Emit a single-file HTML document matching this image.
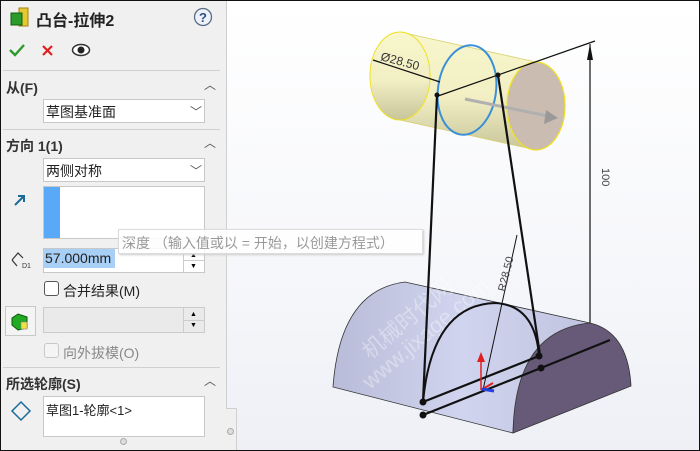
<!DOCTYPE html>
<html><head><meta charset="utf-8"><style>
*{margin:0;padding:0;box-sizing:border-box}
body{width:700px;height:451px;overflow:hidden;background:#fff;font-family:"Liberation Sans","Noto Sans CJK SC",sans-serif;position:relative}
.a{position:absolute}
.frame{position:absolute;left:0;top:0;width:700px;height:451px;border:1px solid #111;pointer-events:none}
.panel{left:1px;top:1px;width:225px;height:449px;background:#f0f0f0}
.t{font-size:14px;color:#222;white-space:nowrap}
.h{font-size:14px;font-weight:bold;color:#333}
.box{background:#fff;border:1px solid #c8c8c8}
.hr{height:1px;background:#d0d0d0;left:3px;width:217px}
.car{font-size:12px;color:#555}
</style></head><body>
<div class="a panel"></div>
<div class="a" style="left:226px;top:1px;width:1px;height:407px;background:#cfcfcf"></div>
<div class="a" style="left:227px;top:1px;width:473px;height:449px;background:linear-gradient(#ffffff,#f6f7fa 60%,#eef0f6)"></div>
<div class="a" style="left:226px;top:408px;width:11px;height:42px;background:#f0f0f0;border-top:1px solid #cfcfcf;border-right:1px solid #cfcfcf"></div>

<svg class="a" style="left:8px;top:6px" width="24" height="24"><rect x="11" y="2" width="9" height="18" fill="#e8c830" stroke="#a08010"/><rect x="3" y="7" width="11" height="12" fill="#2a9a2a" stroke="#106010"/></svg>
<div class="a" style="left:36px;top:7px;font-size:16px;font-weight:bold;color:#222">凸台-拉伸2</div>
<svg class="a" style="left:193px;top:7px" width="20" height="20"><circle cx="10" cy="10" r="8.5" fill="#eef2f8" stroke="#5a6c88" stroke-width="1.3"/><text x="10" y="15" font-size="13" font-weight="bold" text-anchor="middle" fill="#2a4f8a" font-family="Liberation Sans">?</text></svg>
<svg class="a" style="left:8px;top:42px" width="84" height="16"><path d="M2 8 L7 13 L16 3" stroke="#2a9a2a" stroke-width="2.4" fill="none"/><path d="M35 4 L44 13 M44 4 L35 13" stroke="#e02020" stroke-width="2.2"/><ellipse cx="73" cy="8" rx="8.5" ry="5.5" fill="#fff" stroke="#333" stroke-width="1.5"/><circle cx="73" cy="8" r="3.5" fill="#222"/></svg>

<div class="a hr" style="top:70px"></div>
<div class="a h" style="left:6px;top:78px">从(F)</div>
<div class="a car" style="left:204px;top:76px">︿</div>
<div class="a box" style="left:43px;top:99px;width:162px;height:24px"></div>
<div class="a t" style="left:46px;top:102px">草图基准面</div>
<div class="a car" style="left:190px;top:103px">﹀</div>

<div class="a hr" style="top:129px"></div>
<div class="a h" style="left:6px;top:136px">方向 1(1)</div>
<div class="a car" style="left:204px;top:134px">︿</div>
<div class="a box" style="left:43px;top:158px;width:162px;height:24px"></div>
<div class="a t" style="left:46px;top:161px">两侧对称</div>
<div class="a car" style="left:190px;top:162px">﹀</div>
<svg class="a" style="left:12px;top:192px" width="16" height="16"><path d="M3 13 L12 4 M6 4 H12 V10" stroke="#1a6a9a" stroke-width="2" fill="none"/></svg>
<div class="a box" style="left:43px;top:186px;width:162px;height:53px"></div>
<div class="a" style="left:44px;top:187px;width:16px;height:51px;background:#5aa8f8"></div>

<svg class="a" style="left:10px;top:249px" width="24" height="22"><path d="M2 11 L8 4 L13 9 M2 11 L7 17" stroke="#333" stroke-width="1.2" fill="none"/><text x="12" y="19" font-size="7" fill="#333" font-family="Liberation Sans">D1</text></svg>
<div class="a box" style="left:43px;top:248px;width:162px;height:25px"></div>
<div class="a" style="left:44px;top:249px;width:71px;height:19px;background:#a8cff5"></div>
<div class="a t" style="left:45px;top:250px;font-size:14px;color:#222">57.000mm</div>
<div class="a" style="left:183px;top:249px;width:1px;height:23px;background:#ccc"></div>
<div class="a" style="left:184px;top:260px;width:20px;height:1px;background:#ccc"></div>
<div class="a" style="left:190px;top:252px;font-size:7px">▲</div>
<div class="a" style="left:190px;top:263px;font-size:7px">▼</div>

<div class="a" style="left:44px;top:281px;width:15px;height:15px;border:1.3px solid #555;border-radius:3px;background:#fff"></div>
<div class="a t" style="left:63px;top:281px">合并结果(M)</div>

<div class="a" style="left:5px;top:306px;width:31px;height:30px;border:1px solid #c8c8c8;background:#f4f4f4"></div>
<svg class="a" style="left:10px;top:312px" width="22" height="20"><path d="M2 6 L8 2 L17 5 L17 16 L8 18 L2 13Z" fill="#22aa22" stroke="#0a5a0a"/><rect x="11" y="10" width="6" height="7" fill="#f0e040" stroke="#888" stroke-width=".6"/></svg>
<div class="a" style="left:43px;top:307px;width:162px;height:26px;background:#eaeaea;border:1px solid #cacaca"></div>
<div class="a" style="left:183px;top:308px;width:1px;height:24px;background:#ccc"></div>
<div class="a" style="left:184px;top:320px;width:20px;height:1px;background:#ccc"></div>
<div class="a" style="left:190px;top:311px;font-size:7px">▲</div>
<div class="a" style="left:190px;top:322px;font-size:7px">▼</div>

<div class="a" style="left:44px;top:343px;width:15px;height:15px;border:1px solid #c8c8c8;border-radius:3px;background:#f4f4f4"></div>
<div class="a t" style="left:63px;top:343px;color:#888">向外拔模(O)</div>

<div class="a hr" style="top:367px"></div>
<div class="a h" style="left:6px;top:374px">所选轮廓(S)</div>
<div class="a car" style="left:204px;top:372px">︿</div>
<svg class="a" style="left:10px;top:400px" width="22" height="22"><path d="M11 2 L20 11 L11 20 L2 11Z" fill="none" stroke="#1a6a9a" stroke-width="1.5"/></svg>
<div class="a box" style="left:43px;top:396px;width:162px;height:41px"></div>
<div class="a t" style="left:46px;top:400px;font-size:13px">草图1-轮廓&lt;1&gt;</div>
<div class="a" style="left:120px;top:438px;width:7px;height:7px;border-radius:50%;background:#ddd;border:1px solid #aaa"></div>
<div class="a" style="left:227px;top:428px;width:7px;height:7px;border-radius:50%;background:#ddd;border:1px solid #aaa"></div>

<svg class="a" style="left:0;top:0" width="700" height="451">
<defs>
<linearGradient id="cy" x1="0" y1="0" x2="0" y2="1"><stop offset="0" stop-color="#f8f6cc"/><stop offset=".55" stop-color="#f2efc4"/><stop offset="1" stop-color="#c8c59a"/></linearGradient>
<linearGradient id="bd" x1="0" y1="0" x2="1" y2="0"><stop offset="0" stop-color="#b8bcd8"/><stop offset=".5" stop-color="#d0d4ee"/><stop offset="1" stop-color="#c0c4e0"/></linearGradient>
</defs>
<path d="M400 32 L536 62 L536 150 L400 120Z" fill="url(#cy)"/>
<path d="M400 32 L536 62 M400 120 L536 150" stroke="#d8d070" stroke-width=".8"/>
<ellipse cx="400" cy="76" rx="30" ry="44" fill="url(#cy)" stroke="#f0e020" stroke-width="1"/>
<ellipse cx="536" cy="106" rx="29" ry="44" fill="#cbbcb2" stroke="#f0e020" stroke-width="1.2"/>
<ellipse cx="467" cy="90" rx="29" ry="45" transform="rotate(8 467 90)" fill="none" stroke="#3a90d8" stroke-width="2"/>
<path d="M465 99 L548 116" stroke="#b0b0b0" stroke-width="3"/>
<path d="M546 110 L558 118 L544 124Z" fill="#999"/>
<path d="M373 60 L440 82" stroke="#111" stroke-width="1.3"/>
<path d="M438 96 L595 41 M590 44 L590 330 M536 366 L612 338" stroke="#111" stroke-width="1.2"/>
<path d="M590 44 L587 60 L593 60Z" fill="#111"/>
<text x="380" y="60" font-size="12" fill="#333" transform="rotate(15 380 60)" font-family="Liberation Sans">Ø28.50</text>
<text x="602" y="168" font-size="11" fill="#444" transform="rotate(90 602 168)" font-family="Liberation Sans">100</text>
<path d="M333 387 Q340 290 405 282 L590 323 Q518 330 513 433 Z" fill="url(#bd)" stroke="#333" stroke-width=".8"/>
<path d="M513 433 Q515 330 590 323 Q628 332 631 386 Z" fill="#675a78" stroke="#333" stroke-width=".8"/>
<text x="370" y="360" font-size="22" fill="#fff" opacity=".35" transform="rotate(-40 370 360)" font-family="Liberation Sans,Noto Sans CJK SC">机械时代网</text>
<text x="370" y="390" font-size="22" fill="#fff" opacity=".35" transform="rotate(-40 370 390)" font-family="Liberation Sans">www.jixage.com</text>
<path d="M437 95 L423 402 M498 75 L540 355 M423 402 L539 356 M423 415 L541 368 L610 340" stroke="#111" stroke-width="2.2" fill="none"/>
<path d="M423 402 Q432 305 495 303 Q535 305 539 356" stroke="#111" stroke-width="2" fill="none"/>
<path d="M483 390 L517 235" stroke="#111" stroke-width="1"/>
<text x="505" y="292" font-size="11" fill="#444" transform="rotate(-76 505 292)" font-family="Liberation Sans">R28.50</text>
<circle cx="423" cy="402" r="3.5" fill="#111"/><circle cx="423" cy="415" r="3.5" fill="#111"/>
<circle cx="539" cy="356" r="3.5" fill="#111"/><circle cx="541" cy="368" r="3.5" fill="#111"/>
<circle cx="437" cy="95" r="2.5" fill="#111"/><circle cx="498" cy="75" r="2.5" fill="#111"/>
<path d="M481 390 L481 358" stroke="#e02020" stroke-width="1.5"/><path d="M477 362 L481 352 L485 362Z" fill="#e02020"/>
<path d="M481 390 L493 383" stroke="#e02020" stroke-width="2"/><path d="M482 389 L494 391" stroke="#2040e0" stroke-width="3"/>
</svg>

<div class="a" style="left:118px;top:229px;width:305px;height:25px;background:rgba(255,255,255,.85);border:1px solid #dcdcdc;box-shadow:1px 1px 2px #ccc"></div>
<div class="a t" style="left:122px;top:233px;color:#999">深度 （输入值或以 = 开始，以创建方程式）</div>
<div class="frame"></div>
</body></html>
